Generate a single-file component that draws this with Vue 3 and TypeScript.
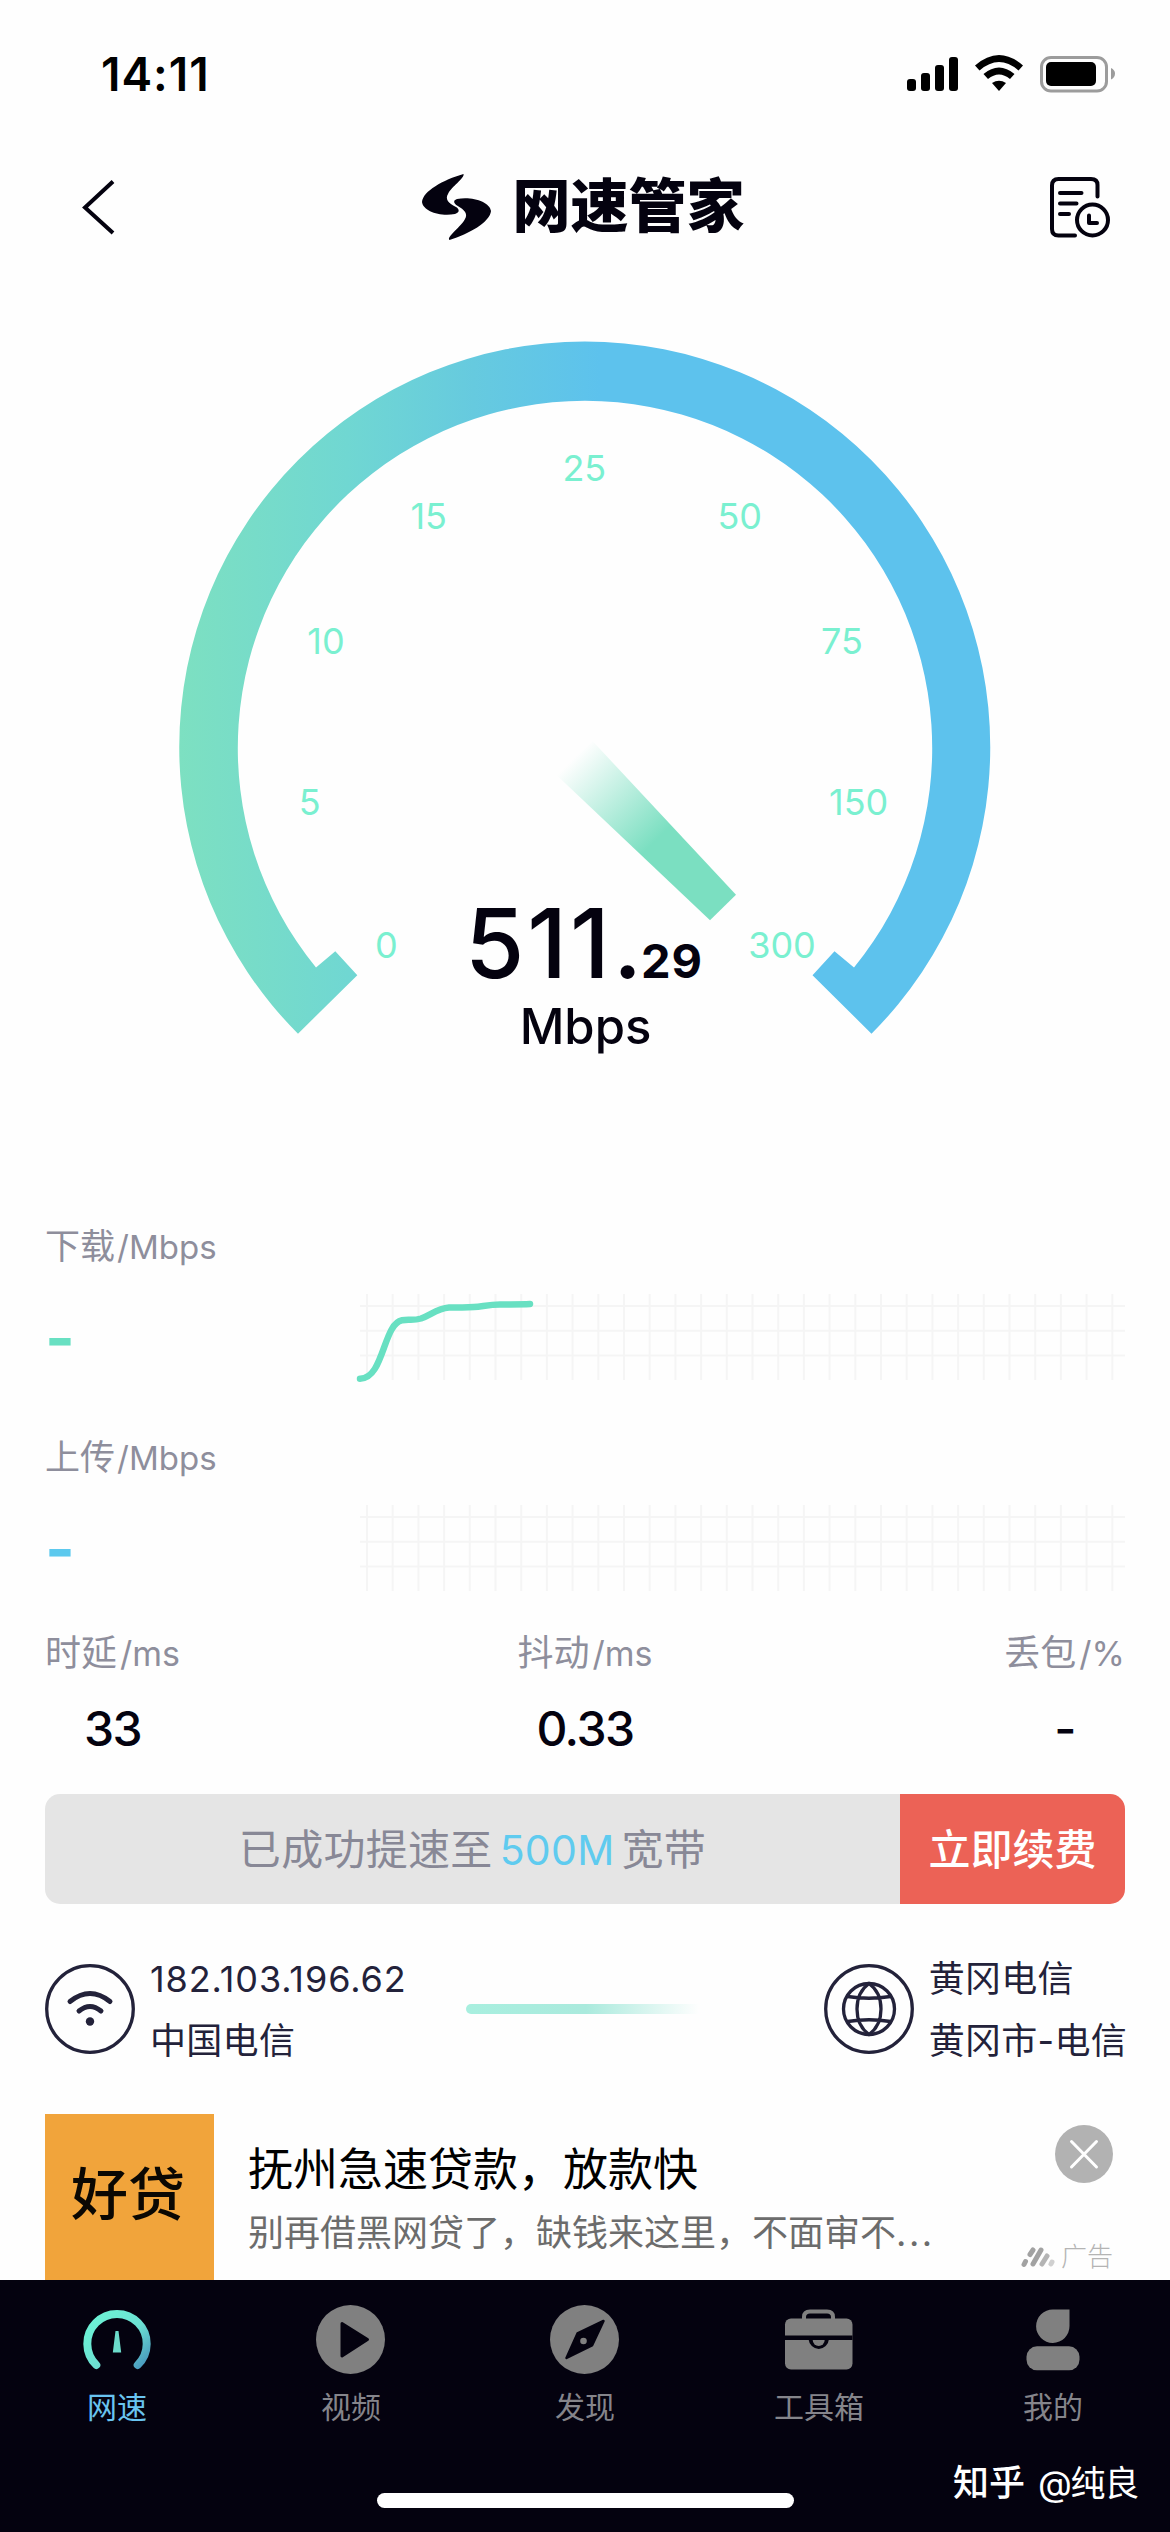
<script setup lang="ts">
interface Tick {
  label: string
  x: number
  y: number
}

interface Metric {
  name: string
  unit: string
  value: string
  color: string
  curve?: string
}

interface Stat {
  name: string
  unit: string
  value: string
}

interface Tab {
  id: string
  label: string
}

const ticks: Tick[] = [
  { label: '0', x: 386.3, y: 945.3 },
  { label: '5', x: 309.7, y: 802.3 },
  { label: '10', x: 326, y: 641.4 },
  { label: '15', x: 428.7, y: 515.6 },
  { label: '25', x: 584.3, y: 468.3 },
  { label: '50', x: 739.7, y: 515.6 },
  { label: '75', x: 842, y: 641.4 },
  { label: '150', x: 858.7, y: 802.3 },
  { label: '300', x: 782, y: 945.3 },
]

const metrics: Metric[] = [
  {
    name: '下载',
    unit: '/Mbps',
    value: '-',
    color: '#68e0c2',
    curve:
      'M5 184.700 C29 184.700 28 130 47 126.300 C54 125 58 127 66 124.500 C76 121 82 114.500 94 113.600 C102 113 108 114 119 113 C128 112.300 134 110.700 145 110.600 C155 110.400 165 110.400 175 110',
  },
  { name: '上传', unit: '/Mbps', value: '-', color: '#5cc9ee' },
]

const columns: number[] = Array.from({ length: 30 }, (_, i) => 12 + i * 25.7)
const rows: number[] = [112, 136.7, 161.5]

const stats: Stat[] = [
  { name: '时延', unit: '/ms', value: '33' },
  { name: '抖动', unit: '/ms', value: '0.33' },
  { name: '丢包', unit: '/%', value: '-' },
]

const tabs: Tab[] = [
  { id: 'speed', label: '网速' },
  { id: 'video', label: '视频' },
  { id: 'discover', label: '发现' },
  { id: 'tools', label: '工具箱' },
  { id: 'mine', label: '我的' },
]
</script>

<template>
  <div class="screen">
    <div class="status">
      <span class="time">14:11</span>
      <svg class="status-icons" width="210" height="40" viewBox="906 54 210 40">
        <rect x="907" y="79" width="9" height="12" rx="3" />
        <rect x="921" y="73" width="9" height="18" rx="3" />
        <rect x="935" y="65" width="9" height="26" rx="3" />
        <rect x="949" y="57" width="9" height="34" rx="3" />
        <path d="M975 65.500 Q999 44.500 1023 65.500 L1018.500 70.500 Q999 53.500 979.500 70.500 Z" />
        <path d="M983.500 74 Q999 61 1014.500 74 L1010 79 Q999 70 988 79 Z" />
        <path d="M992 83 Q999 78.500 1006 83 L999 91 Z" />
        <rect x="1041.500" y="57.500" width="65" height="33.500" rx="9.500" fill="none" stroke="#9c9c9c" stroke-width="3" />
        <rect x="1046" y="62" width="50" height="24" rx="5" />
        <path d="M1111 68 Q1115 70 1115 73.500 Q1115 77.500 1111 79.500 Z" fill="#9c9c9c" />
      </svg>
    </div>

    <header class="header">
      <svg class="back" width="40" height="60" viewBox="0 0 40 60">
        <path d="M34 4.500 L6 30.500 L34 56" fill="none" stroke="#04020f" stroke-width="4" />
      </svg>
      <div class="brand">
        <svg width="70" height="68" viewBox="423 173 70 68">
          <path d="M464.500 174 C444 180 424 191 423 202 C424 211 441 217 456 214 C461 212.500 460.500 209 457 207 C449 203 446 199 449 194 C452 187 466 178 464.500 174 Z" />
          <path d="M450.500 240 C470 234 491 222 492 211 C491 202 473 196 458 199 C453.500 200.500 455 203.500 458 205.500 C466 210 469 214 466 219 C463 226 447 237 450.500 240 Z" />
        </svg>
        <span class="brand-name">网速管家</span>
      </div>
      <svg class="history" width="64" height="64" viewBox="1048 174 64 64">
        <g fill="none" stroke="#04020f" stroke-width="4" stroke-linecap="round" stroke-linejoin="round">
          <path d="M1097.500 195.500 V184 Q1097.500 178 1091 178 H1058.500 Q1052 178 1052 184.500 V228 Q1052 234.500 1058.500 234.500 H1075" />
          <path d="M1060 192 H1081.500 M1060 202.500 H1076.500 M1060 213 H1069" />
          <circle cx="1092.500" cy="219" r="15.500" />
          <path d="M1089 214.500 V222 H1097" />
        </g>
      </svg>
    </header>

    <svg class="gauge" width="1170" height="926" viewBox="0 268 1170 926">
      <defs>
        <linearGradient id="dial" gradientUnits="userSpaceOnUse" x1="179" y1="0" x2="600" y2="0">
          <stop offset="0" stop-color="#7de0c1" />
          <stop offset="0.4" stop-color="#70d7d2" />
          <stop offset="0.7" stop-color="#66cadf" />
          <stop offset="1" stop-color="#5dc2ed" />
        </linearGradient>
        <linearGradient id="needle" gradientUnits="userSpaceOnUse" x1="574" y1="758" x2="723" y2="908">
          <stop offset="0" stop-color="#7bdfc1" stop-opacity="0" />
          <stop offset="0.55" stop-color="#7bdfc1" />
          <stop offset="1" stop-color="#7bdfc1" />
        </linearGradient>
      </defs>
      <path
        fill="url(#dial)"
        d="M298 1033.700 A405.500 405.500 0 1 1 871.500 1033.700 L812.500 975.200 L834.500 951.200 L854 967.500 A347.200 347.200 0 1 0 316 967.500 L335.300 951.200 L357.300 975.200 Z"
      />
      <path fill="url(#needle)" d="M592.500 741 L736 894.800 L710 920.300 L556.500 775 Z" />
      <g class="ticks">
        <text v-for="t in ticks" :key="t.label" :x="t.x" :y="t.y + 13">{{ t.label }}</text>
      </g>
      <g class="reading">
        <text class="whole" x="465" y="977.500" textLength="177">511.</text>
        <text class="fraction" x="641" y="977.500" textLength="61">29</text>
        <text class="unit" x="585.500" y="1043.500">Mbps</text>
      </g>
    </svg>

    <section v-for="m in metrics" :key="m.name" class="metric">
      <div class="metric-text">
        <div class="metric-name">{{ m.name }}<span>{{ m.unit }}</span></div>
        <div class="metric-value" :style="{ color: m.color }">{{ m.value }}</div>
      </div>
      <svg width="770" height="211" viewBox="0 0 770 211">
        <g stroke="#f5f5f5" stroke-width="2">
          <line v-for="x in columns" :key="x" :x1="x" :x2="x" y1="100" y2="186" />
          <line v-for="y in rows" :key="y" x1="5" x2="770" :y1="y" :y2="y" />
        </g>
        <path v-if="m.curve" :d="m.curve" fill="none" :stroke="m.color" stroke-width="6.500" stroke-linecap="round" />
      </svg>
    </section>

    <section class="stats">
      <div v-for="s in stats" :key="s.name" class="stat">
        <div class="stat-name">{{ s.name }}<span>{{ s.unit }}</span></div>
        <div class="stat-value">{{ s.value }}</div>
      </div>
    </section>

    <section class="banner">
      <div class="banner-text">已成功提速至<b>500M</b>宽带</div>
      <div class="banner-button">立即续费</div>
    </section>

    <section class="network">
      <div class="endpoint">
        <svg width="90" height="90" viewBox="0 0 90 90" fill="none" stroke="#23223a" stroke-linecap="round">
          <circle cx="45" cy="45" r="43.300" stroke-width="3.300" />
          <path d="M25 37.500 Q45 21.500 65 37.500 M34 47 Q45 38 56 47" stroke-width="5" />
          <circle cx="45" cy="57.500" r="4.200" fill="#23223a" stroke="none" />
        </svg>
        <div class="endpoint-text">
          <div class="ip">182.103.196.62</div>
          <div>中国电信</div>
        </div>
      </div>
      <div class="link"></div>
      <div class="endpoint">
        <svg width="90" height="90" viewBox="0 0 90 90" fill="none" stroke="#23223a">
          <circle cx="45" cy="45" r="43.300" stroke-width="3.300" />
          <g stroke-width="3.300">
            <circle cx="45" cy="45" r="25.500" />
            <path d="M45 19.500 C29 31 29 59 45 70.500 C61 59 61 31 45 19.500 Z M23.500 32.500 Q45 36 66.500 32.500 M23.500 57.500 Q45 54 66.500 57.500" />
          </g>
        </svg>
        <div class="endpoint-text">
          <div>黄冈电信</div>
          <div>黄冈市-电信</div>
        </div>
      </div>
    </section>

    <section class="ad">
      <div class="ad-cover">好贷</div>
      <div class="ad-text">
        <div class="ad-title">抚州急速贷款，放款快</div>
        <div class="ad-sub">别再借黑网贷了，缺钱来这里，不面审不<span>...</span></div>
      </div>
      <div class="ad-side">
        <svg width="58" height="58" viewBox="0 0 58 58">
          <circle cx="29" cy="29" r="29" fill="#b2b2b2" />
          <path d="M16.500 16.500 L41.500 42 M41.500 16.500 L16.500 42" stroke="#fff" stroke-width="3" stroke-linecap="round" />
        </svg>
        <div class="ad-tag">
          <svg width="34" height="22" viewBox="0 0 34 22" fill="none" stroke-width="5" stroke-linecap="round">
            <path d="M3 18.500 L4.500 15.500 M9 8.500 L12 4 M12 18 L20 4" stroke="#a2a2a2" />
            <path d="M21 18 L26 10" stroke="#b4b4b4" />
            <path d="M30 18 L31 16" stroke="#d0d0d0" />
          </svg>
          <span>广告</span>
        </div>
      </div>
    </section>

    <nav class="tabbar">
      <div class="tabs">
        <div v-for="tab in tabs" :key="tab.id" class="tab" :class="{ active: tab.id === 'speed' }">
          <svg v-if="tab.id === 'speed'" width="70" height="70" viewBox="0 0 70 70">
            <defs>
              <linearGradient id="tabdial" x1="0.1" y1="0.2" x2="1" y2="1">
                <stop offset="0" stop-color="#6cf0d4" />
                <stop offset="0.5" stop-color="#6ce0d2" />
                <stop offset="1" stop-color="#4796bd" />
              </linearGradient>
            </defs>
            <path d="M14.300 60 A29.700 29.700 0 1 1 55.700 60" fill="none" stroke="url(#tabdial)" stroke-width="8" stroke-linecap="round" />
            <path d="M33.500 26 H36.500 L39.200 47.500 H30.800 Z" fill="#6cdccb" />
          </svg>
          <svg v-else-if="tab.id === 'video'" width="70" height="70" viewBox="0 0 70 70">
            <circle cx="34.500" cy="34.500" r="34.500" />
            <path d="M26 18.500 L51.500 34.500 L26 51 Z" fill="#04020f" stroke="#04020f" stroke-width="3" stroke-linejoin="round" />
          </svg>
          <svg v-else-if="tab.id === 'discover'" width="70" height="70" viewBox="0 0 70 70">
            <circle cx="34.500" cy="34.500" r="34.500" />
            <path d="M53.500 16 L42 40.500 L16.500 53 L27.500 28.500 Z" fill="#04020f" stroke="#04020f" stroke-width="2.500" stroke-linejoin="round" />
            <circle cx="33.500" cy="36" r="3.300" />
          </svg>
          <svg v-else-if="tab.id === 'tools'" width="70" height="70" viewBox="0 0 70 70">
            <path d="M20 15 V12 Q20 6.500 26 6.500 H43 Q49 6.500 49 12 V15" fill="none" stroke="#808080" stroke-width="4" />
            <rect x="1" y="13.500" width="67.500" height="51" rx="6" />
            <rect x="1" y="30.500" width="67.500" height="4.500" fill="#04020f" />
            <path d="M24.500 34 A10.300 11 0 0 0 45 34 Z" fill="#04020f" />
            <path d="M28.700 35 A6 6 0 0 0 40.700 35 Z" />
          </svg>
          <svg v-else width="70" height="70" viewBox="0 0 70 70">
            <path d="M51.500 4.500 V21 A16.700 16.700 0 1 1 35 4.500 Z" />
            <rect x="8.500" y="41.300" width="53" height="24" rx="10.500" />
          </svg>
          <span>{{ tab.label }}</span>
        </div>
      </div>
      <div class="home"></div>
      <div class="watermark"><b>知乎</b><span>@纯良</span></div>
    </nav>
  </div>
</template>

<style>
body {
  margin: 0;
  background: #fefefe;
}
</style>

<style scoped>
.screen {
  display: flex;
  flex-direction: column;
  width: 1170px;
  height: 2532px;
  overflow: hidden;
  background: #fefefe;
  color: #04020f;
  font-family: Inter, 'Noto Sans CJK SC', sans-serif;
  white-space: nowrap;
}
svg {
  display: block;
  flex: none;
}
.status {
  display: flex;
  justify-content: space-between;
  align-items: center;
  height: 148px;
  padding: 0 54px 0 101px;
  box-sizing: border-box;
  color: #000;
}
.time {
  font-size: 46px;
  font-weight: 600;
  letter-spacing: 1px;
}
.header {
  display: flex;
  justify-content: space-between;
  align-items: center;
  height: 120px;
  padding: 0 58px 2px 79px;
  box-sizing: border-box;
}
.brand {
  display: flex;
  align-items: center;
  gap: 20px;
  height: 68px;
}
.brand svg {
  fill: #04020f;
}
.brand-name {
  padding-bottom: 2px;
  font-size: 58px;
  font-weight: 900;
  line-height: 68px;
}
.ticks {
  font-size: 36px;
  fill: #7af0d0;
  text-anchor: middle;
}
.reading {
  fill: #04020f;
}
.whole {
  font-size: 96px;
  font-weight: 500;
}
.fraction {
  font-size: 47px;
  font-weight: 700;
}
.unit {
  font-size: 49px;
  font-weight: 500;
  text-anchor: middle;
}
.metric {
  display: flex;
  justify-content: space-between;
  height: 211px;
  padding: 0 45px;
}
.metric-name {
  height: 104px;
  line-height: 104px;
  font-size: 35px;
  color: #8e8e9c;
}
.metric-name span {
  margin-left: 2px;
  font-size: 33px;
}
.metric-value {
  height: 86px;
  line-height: 79px;
  font-size: 64px;
  font-weight: 700;
}
.stats {
  display: grid;
  grid-template-columns: 1fr auto 1fr;
  height: 178px;
  padding: 0 45px;
  box-sizing: border-box;
}
.stat {
  justify-self: start;
  text-align: center;
}
.stat:last-child {
  justify-self: end;
}
.stat-name {
  line-height: 74px;
  font-size: 36px;
  color: #8e8e9c;
}
.stat-name span {
  margin-left: 3px;
  font-size: 34px;
}
.stat-value {
  line-height: 75px;
  font-size: 48px;
  font-weight: 500;
  letter-spacing: -1.5px;
}
.banner {
  display: flex;
  height: 110px;
  margin: 0 45px;
  border-radius: 15px;
  overflow: hidden;
  font-size: 42px;
  line-height: 112px;
  text-align: center;
}
.banner-text {
  flex: 1;
  background: #e5e5e5;
  color: #888896;
  letter-spacing: 0.3px;
}
.banner-text b {
  margin: 0 7px;
  color: #5fcbef;
  font-size: 41px;
  font-weight: 400;
}
.banner-button {
  width: 225px;
  background: #ec6256;
  color: #fff;
  font-weight: 500;
}
.network {
  display: flex;
  justify-content: space-between;
  align-items: center;
  height: 210px;
  padding: 0 43px 0 45px;
  color: #23223a;
}
.endpoint {
  display: flex;
  align-items: center;
  gap: 15px;
}
.endpoint-text {
  padding-top: 2px;
  font-size: 36px;
  line-height: 62px;
  letter-spacing: 0.3px;
}
.ip {
  letter-spacing: 0.9px;
}
.link {
  width: 240px;
  height: 10px;
  margin-right: 58px;
  border-radius: 5px;
  background: linear-gradient(90deg, #a8efdf 0%, #aaeadd 50%, rgba(170, 234, 221, 0) 97%);
}
.ad {
  display: flex;
  height: 166px;
  padding: 0 57px 0 45px;
}
.ad-cover {
  width: 169px;
  height: 166px;
  background: #f1a43b;
  color: #0b0803;
  font-size: 57px;
  font-weight: 500;
  line-height: 161px;
  text-align: center;
  text-indent: -3px;
}
.ad-text {
  flex: 1;
  padding: 23px 0 0 34px;
}
.ad-title {
  color: #000;
  font-size: 45px;
  line-height: 66px;
}
.ad-sub {
  color: #6c6c6c;
  font-size: 36px;
  line-height: 60px;
}
.ad-sub span {
  letter-spacing: 2.5px;
}
.ad-side {
  display: flex;
  flex-direction: column;
  align-items: flex-end;
  justify-content: space-between;
  padding: 11px 0 4px;
}
.ad-tag {
  display: flex;
  align-items: center;
  gap: 6px;
  color: #b4b4b4;
  font-size: 26px;
  font-weight: 300;
  line-height: 38px;
}
.tabbar {
  position: relative;
  height: 252px;
  background: #04020f;
}
.tabs {
  display: flex;
  padding-top: 25px;
}
.tab {
  display: flex;
  flex: 1;
  flex-direction: column;
  align-items: center;
  color: #85858b;
  font-size: 30px;
  line-height: 64px;
}
.tab svg {
  fill: #808080;
}
.tab.active {
  color: #69c4f0;
}
.home {
  position: absolute;
  left: 377px;
  bottom: 24px;
  width: 417px;
  height: 15px;
  border-radius: 8px;
  background: #fff;
}
.watermark {
  position: absolute;
  right: 32px;
  bottom: 23px;
  display: flex;
  gap: 13px;
  color: #fff;
  font-size: 36px;
  line-height: 52px;
}
.watermark b {
  font-weight: 500;
}
.watermark span {
  letter-spacing: -1.3px;
  font-size: 35px;
}
</style>
